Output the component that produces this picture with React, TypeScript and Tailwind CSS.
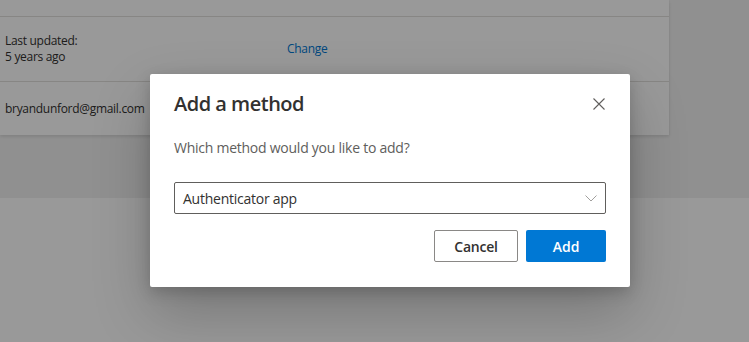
import { useState } from 'react'

const font = { fontFamily: '"Open Sans", "Noto Sans", Arial, sans-serif' }

function Dismiss() {
  return (
    <svg width="12" height="12" viewBox="0 0 12 12" fill="none" stroke="#605e5c" strokeWidth="1.1">
      <path d="M0.5 0.5L11.5 11.5M11.5 0.5L0.5 11.5" />
    </svg>
  )
}

function Chevron() {
  return (
    <svg width="12" height="7" viewBox="0 0 12 7" fill="none" stroke="#a19f9d" strokeWidth="1">
      <path d="M0.5 0.5L6 6L11.5 0.5" />
    </svg>
  )
}

export default function App() {
  const [method] = useState('Authenticator app')

  return (
    <div className="relative h-[342px] w-[749px] overflow-hidden bg-white text-[#323130]" style={font}>
      {/* page behind the dialog */}
      <div className="h-[198px] bg-[#f1f1f1]">
        <div className="w-[669px] bg-white text-[12px] tracking-[-0.3px] shadow-[0_1.6px_3.6px_rgba(0,0,0,0.13),0_0.3px_0.9px_rgba(0,0,0,0.11)]">
          <div className="h-[17px] border-b border-[#e1dfdd]" />
          <div className="flex h-[65px] items-center border-b border-[#e1dfdd] leading-4">
            <div className="w-[287px] pl-[5px]">
              <div>Last updated:</div>
              <div>5 years ago</div>
            </div>
            <span className="text-[#0078d4]">Change</span>
          </div>
          <div className="flex h-[53px] items-center pl-[5px]">bryandunford@gmail.com</div>
        </div>
      </div>

      {/* overlay */}
      <div className="absolute inset-0 bg-black/40" />

      {/* dialog */}
      <div className="absolute left-[150px] top-[74px] w-[480px] rounded-[2px] bg-white px-6 pt-4 pb-[25px] shadow-[0_25.6px_57.6px_rgba(0,0,0,0.22),0_4.8px_14.4px_rgba(0,0,0,0.18)]">
        <div className="flex h-7 items-center justify-between pr-px">
          <h2 className="text-[20px] font-semibold leading-7 tracking-[-0.5px] text-[#323130]">Add a method</h2>
          <Dismiss />
        </div>
        <p className="mt-5 text-[14px] leading-5 tracking-[-0.25px] text-[#605e5c]">Which method would you like to add?</p>
        <div className="mt-6 flex h-8 items-center justify-between rounded-[2px] border border-[#605e5c] pl-2 pr-2">
          <span className="text-[14px] tracking-[-0.25px] text-[#323130]">{method}</span>
          <Chevron />
        </div>
        <div className="mt-4 flex justify-end gap-2">
          <button className="h-8 w-[84px] rounded-[2px] border border-[#8a8886] bg-white text-[14px] font-semibold tracking-[-0.25px] text-[#323130]">
            Cancel
          </button>
          <button className="h-8 w-[80px] rounded-[2px] bg-[#0078d4] text-[14px] font-semibold text-white">
            Add
          </button>
        </div>
      </div>
    </div>
  )
}
